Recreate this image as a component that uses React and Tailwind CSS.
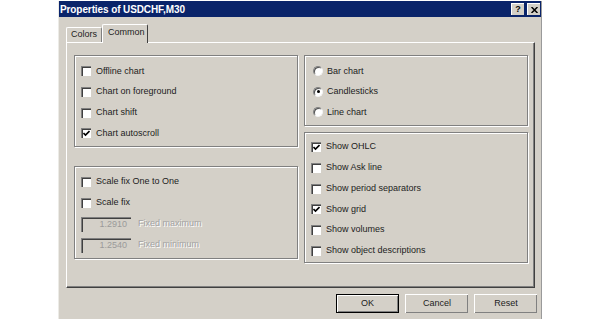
import React from 'react';

function CheckBox({ checked }) {
  return (
    <div className="w-[10px] h-[10px] shrink-0 bg-white border-t border-l border-[#808080] border-b-white border-r-white shadow-[inset_1px_1px_0_#404040] flex items-center justify-center">
      {checked && (
        <svg width="7" height="7" viewBox="0 0 7 7">
          <path d="M0.5 3 L2.5 5 L6.5 1" stroke="#000" strokeWidth="1.6" fill="none" />
        </svg>
      )}
    </div>
  );
}

function Radio({ checked }) {
  return (
    <div className="w-[10px] h-[10px] shrink-0 rounded-full bg-white border border-t-[#808080] border-l-[#808080] border-b-[#f4f4f4] border-r-[#f4f4f4] shadow-[inset_1px_1px_0_#505050] flex items-center justify-center">
      {checked && <div className="w-[3px] h-[3px] rounded-full bg-black" />}
    </div>
  );
}

function CheckRow({ label, checked, h }) {
  return (
    <div className={`flex items-center gap-[5px] ${h}`}>
      <CheckBox checked={checked} />
      <span>{label}</span>
    </div>
  );
}

function RadioRow({ label, checked }) {
  return (
    <div className="flex items-center gap-[4px] h-[20.5px]">
      <Radio checked={checked} />
      <span>{label}</span>
    </div>
  );
}

function FixedRow({ value, label }) {
  return (
    <div className="flex items-center gap-[7px] h-[21px]">
      <div className="w-[50px] h-[15px] border-t border-l border-[#808080] border-b-white border-r-white shadow-[inset_1px_1px_0_#404040] flex items-center justify-end pr-[4px] text-[#9a9a9a]">
        {value}
      </div>
      <span className="text-[#a3a3a3] [text-shadow:1px_1px_0_#fff]">{label}</span>
    </div>
  );
}

function Group({ className, children }) {
  return (
    <div className={`border border-[#808080] shadow-[inset_1px_1px_0_#fff,1px_1px_0_#fff] ${className}`}>
      {children}
    </div>
  );
}

function Button({ children, def }) {
  return (
    <div className={`w-[63px] h-[19px] flex items-center justify-center ${def ? 'border border-black shadow-[inset_1px_1px_0_#fff,inset_-1px_-1px_0_#808080]' : 'border-t border-l border-white border-b-[#404040] border-r-[#404040] shadow-[inset_-1px_-1px_0_#808080]'}`}>
      {children}
    </div>
  );
}

export default function App() {
  return (
    <div className="w-[600px] h-[324px] bg-white pt-[1px] pl-[58px] font-['Liberation_Sans',Arial,sans-serif] text-[9px] text-[#1c1c1c]">
      <div className="w-[484px] h-[318px] bg-[#d4d0c8] flex flex-col border-r border-[#9a9a9a] border-l border-l-[#ecebe6]">
        {/* title bar */}
        <div className="h-[16px] bg-[#0a246a] flex items-center justify-between pl-[1px] pr-[1px]">
          <span className="text-white font-bold text-[10px] tracking-[-0.1px]">Properties of USDCHF,M30</span>
          <div className="flex gap-[3px]">
            <div className="w-[13px] h-[12px] bg-[#d4d0c8] border-t border-l border-white border-b-[#404040] border-r-[#404040] flex items-center justify-center font-bold text-[9px] text-black leading-none">
              ?
            </div>
            <div className="w-[13px] h-[12px] bg-[#d4d0c8] border-t border-l border-white border-b-[#404040] border-r-[#404040] flex items-center justify-center">
              <svg width="7" height="6" viewBox="0 0 7 6">
                <path d="M0.5 0 L6.5 6 M6.5 0 L0.5 6" stroke="#000" strokeWidth="1.5" />
              </svg>
            </div>
          </div>
        </div>

        <div className="pl-[7px] pt-[7px]">
          {/* tabs */}
          <div className="flex items-end h-[18px]">
            <div className="w-[36px] h-[15px] border-t border-l border-white border-r border-r-[#808080] rounded-t-[2px] flex items-center pl-[4px]">
              Colors
            </div>
            <div className="relative z-10 w-[46px] h-[19px] -mb-px bg-[#d4d0c8] border-t border-l border-white border-r border-r-[#404040] rounded-t-[2px] flex items-center pl-[5px] pb-[2px]">
              Common
            </div>
          </div>

          {/* tab page */}
          <div className="w-[469px] h-[246px] border-t border-l border-white border-r border-b border-r-[#404040] border-b-[#404040] shadow-[inset_-1px_-1px_0_#808080] pl-[7px] pt-[12px] flex gap-[6px]">
            <div className="w-[224px] flex flex-col">
              <Group className="h-[92px] pl-[6px] pt-[5px]">
                <CheckRow h="h-[20.7px]" label="Offline chart" />
                <CheckRow h="h-[20.7px]" label="Chart on foreground" />
                <CheckRow h="h-[20.7px]" label="Chart shift" />
                <CheckRow h="h-[20.7px]" label="Chart autoscroll" checked />
              </Group>
              <Group className="h-[93px] mt-[19px] pl-[6px] pt-[4.5px]">
                <CheckRow h="h-[21px]" label="Scale fix One to One" />
                <CheckRow h="h-[21px]" label="Scale fix" />
                <FixedRow value="1.2910" label="Fixed maximum" />
                <FixedRow value="1.2540" label="Fixed minimum" />
              </Group>
            </div>
            <div className="w-[224px] flex flex-col">
              <Group className="h-[71px] pl-[8px] pt-[5px]">
                <RadioRow label="Bar chart" />
                <RadioRow label="Candlesticks" checked />
                <RadioRow label="Line chart" />
              </Group>
              <Group className="h-[131px] mt-[6px] pl-[6px] pt-[3.6px]">
                <CheckRow h="h-[20.8px]" label="Show OHLC" checked />
                <CheckRow h="h-[20.8px]" label="Show Ask line" />
                <CheckRow h="h-[20.8px]" label="Show period separators" />
                <CheckRow h="h-[20.8px]" label="Show grid" checked />
                <CheckRow h="h-[20.8px]" label="Show volumes" />
                <CheckRow h="h-[20.8px]" label="Show object descriptions" />
              </Group>
            </div>
          </div>

          {/* buttons */}
          <div className="flex justify-end gap-[6px] mt-[6px] pr-[4px]">
            <Button def>OK</Button>
            <Button>Cancel</Button>
            <Button>Reset</Button>
          </div>
        </div>
      </div>
    </div>
  );
}
